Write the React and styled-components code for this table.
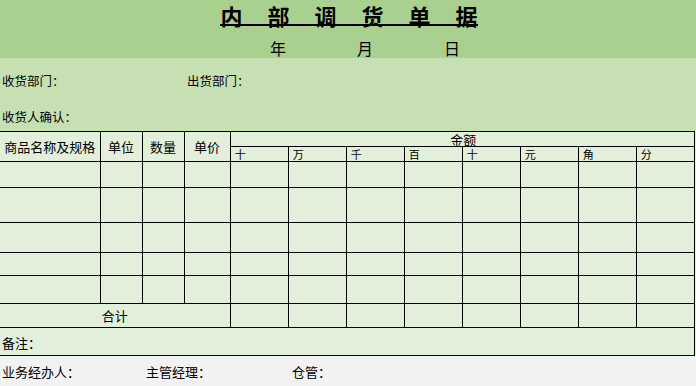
import styled, { createGlobalStyle } from "styled-components";

const GlobalStyle = createGlobalStyle`
  body {
    margin: 0;
    background: #f2f2f2;
    font-family: "Noto Sans CJK SC", "Noto Sans", sans-serif;
    color: #000;
  }
`;

const titleChars = ["内", "部", "调", "货", "单", "据"];
const amountCols = ["十", "万", "千", "百", "十", "元", "角", "分"];
const rowHeights = [26, 35, 30, 23, 28];

const App = () => {
  return (
    <Sheet>
      <GlobalStyle />
      <TitleBand>
        <Title>
          {titleChars.map((c, i) => (
            <span key={i}>{c}</span>
          ))}
        </Title>
        <DateLine>
          <span>年</span>
          <span>月</span>
          <span>日</span>
        </DateLine>
      </TitleBand>

      <InfoBand>
        <InfoRow>
          <span>收货部门：</span>
          <span>出货部门：</span>
        </InfoRow>
        <InfoRow>
          <span>收货人确认：</span>
        </InfoRow>
      </InfoBand>

      <TableWrap>
        <Grid>
          <colgroup>
            <col style={{ width: 100 }} />
            <col style={{ width: 42 }} />
            <col style={{ width: 42 }} />
            <col style={{ width: 46 }} />
            {amountCols.map((_, i) => (
              <col key={i} style={{ width: 58 }} />
            ))}
          </colgroup>
          <tbody>
            <Row $h={15}>
              <HeadCell rowSpan={2} $first>
                商品名称及规格
              </HeadCell>
              <HeadCell rowSpan={2}>单位</HeadCell>
              <HeadCell rowSpan={2}>数量</HeadCell>
              <HeadCell rowSpan={2}>单价</HeadCell>
              <AmountHead colSpan={8}>金额</AmountHead>
            </Row>
            <Row $h={15}>
              {amountCols.map((c, i) => (
                <SubHead key={i}>{c}</SubHead>
              ))}
            </Row>
            {rowHeights.map((h, r) => (
              <Row key={r} $h={h}>
                <Cell $first />
                <Cell />
                <Cell />
                <Cell />
                {amountCols.map((_, i) => (
                  <Cell key={i} />
                ))}
              </Row>
            ))}
            <Row $h={24}>
              <TotalCell colSpan={4} $first>
                合计
              </TotalCell>
              {amountCols.map((_, i) => (
                <Cell key={i} />
              ))}
            </Row>
            <Row $h={28}>
              <NoteCell colSpan={12}>备注：</NoteCell>
            </Row>
          </tbody>
        </Grid>
      </TableWrap>

      <Footer>
        <span>业务经办人：</span>
        <span>主管经理：</span>
        <span>仓管：</span>
      </Footer>
    </Sheet>
  );
};

const Sheet = styled.div`
  width: 696px;
  height: 386px;
  overflow: hidden;
  background: #f2f2f2;
`;

const TitleBand = styled.header`
  height: 58px;
  background: #a9d08e;
  display: flex;
  flex-direction: column;
  align-items: center;
  box-sizing: border-box;
  padding-top: 3px;
`;

const Title = styled.h1`
  margin: 0 0 0 2px;
  display: flex;
  align-items: flex-start;
  gap: 25px;
  font-size: 22px;
  font-weight: 700;
  line-height: 24px;
  border-bottom: 2px solid #000;
  span {
    display: block;
    margin-bottom: -3px;
  }
`;

const DateLine = styled.div`
  margin-top: 13px;
  margin-left: 34px;
  display: flex;
  gap: 71px;
  font-size: 16px;
  line-height: 18px;
`;

const InfoBand = styled.section`
  height: 73px;
  background: #c6e0b4;
  box-sizing: border-box;
  padding: 12px 0 0 2px;
  display: flex;
  flex-direction: column;
  gap: 14px;
`;

const InfoRow = styled.div`
  display: grid;
  grid-template-columns: 185px 1fr;
  font-size: 12.5px;
  line-height: 22px;
`;

const TableWrap = styled.div`
  background: #e2efda;
`;

const Grid = styled.table`
  border-collapse: collapse;
  table-layout: fixed;
  width: 695px;
  background: #e2efda;
`;

const Row = styled.tr`
  height: ${(p) => p.$h}px;
`;

const Cell = styled.td`
  border: 1px solid #000;
  border-left: ${(p) => (p.$first ? "none" : "1px solid #000")};
  padding: 0;
`;

const HeadCell = styled(Cell)`
  text-align: center;
  vertical-align: middle;
  font-size: 13px;
  line-height: 16px;
  padding-top: 1px;
`;

const AmountHead = styled(Cell)`
  text-align: center;
  font-size: 13px;
  line-height: 13px;
  padding: 0 0 0 2px;
`;

const SubHead = styled(Cell)`
  font-size: 11px;
  line-height: 13px;
  padding: 1px 0 0 4px;
`;

const TotalCell = styled(Cell)`
  text-align: center;
  font-size: 13px;
  line-height: 16px;
`;

const NoteCell = styled(Cell)`
  border-left: none;
  font-size: 13px;
  line-height: 16px;
  padding: 2px 0 0 2px;
`;

const Footer = styled.footer`
  display: grid;
  grid-template-columns: 144px 146px 1fr;
  padding: 7px 0 0 2px;
  font-size: 13px;
  line-height: 18px;
`;

export default App;
